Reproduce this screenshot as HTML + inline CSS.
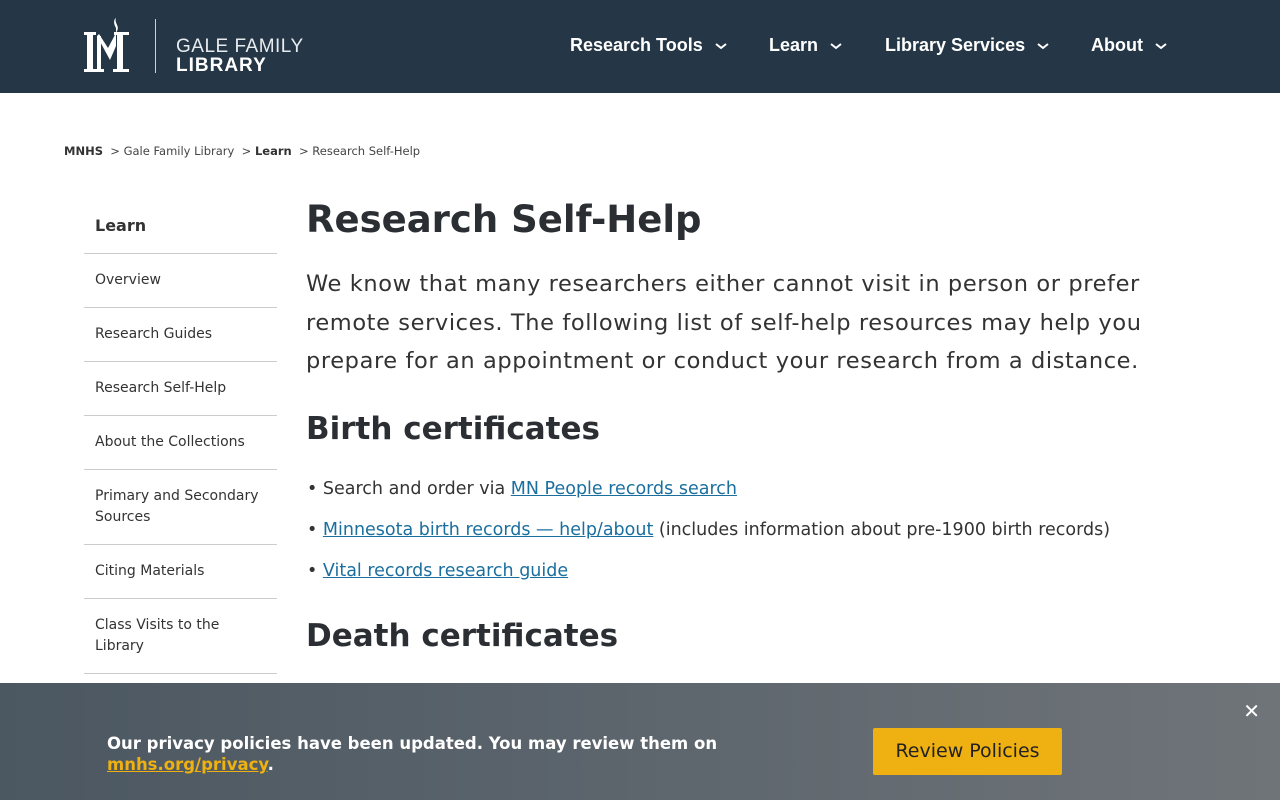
<!DOCTYPE html>
<html><head><meta charset="utf-8"><style>
*{margin:0;padding:0;box-sizing:border-box}
body{width:1280px;height:800px;overflow:hidden;font-family:"DejaVu Sans",sans-serif;color:#2b2f33;background:#fff;position:relative}
.hdr{height:93px;background:#253746;position:relative;color:#fff;font-family:"Liberation Sans",sans-serif}
.logo{position:absolute;left:84px;top:18px}
.vline{position:absolute;left:155px;top:19px;width:1px;height:54px;background:#c8d0d8}
.lt1{position:absolute;left:176px;top:36px;font-size:19px;letter-spacing:.5px;color:#e8ecef}
.lt2{position:absolute;left:176px;top:55px;font-size:19px;font-weight:bold;letter-spacing:1px}
.nav{position:absolute;top:35px;font-size:18px;font-weight:bold;color:#fff}
.nav svg{margin-left:12px;vertical-align:middle}
.bc{position:absolute;top:144px;left:64px;font-size:11.5px;color:#444}
.bc b{color:#333}
.side{position:absolute;left:84px;top:198px;width:193px}
.side div{border-bottom:1px solid #ccc;padding:0 11px;font-size:14px;color:#333;display:flex;align-items:center;line-height:21px}
h1{position:absolute;left:306px;top:198px;font-size:37px;font-weight:bold}
.intro{position:absolute;left:306px;top:265px;width:880px;font-size:22.5px;line-height:38.5px;color:#333;letter-spacing:.6px}
h2{position:absolute;left:306px;font-size:31px;font-weight:bold}
.li{position:absolute;left:307px;font-size:17.5px;color:#333}
.li a{color:#1a6f9e;text-decoration:underline}
.ban{position:absolute;left:0;top:683px;width:1280px;height:117px;background:linear-gradient(90deg,#4b5761,#6f7479)}
.bt{position:absolute;left:107px;top:50px;color:#fff;font-weight:bold;font-size:16.5px;line-height:21px}
.bt a{color:#eeb111;text-decoration:underline}
.btn{position:absolute;left:873px;top:45px;width:189px;height:47px;background:#eeb111;border-radius:2px;color:#222;font-size:19px;text-align:center;line-height:47px}
.x{position:absolute;right:20px;top:16px;color:#fff;font-size:20px}
</style></head><body>
<div class="hdr">
<svg class="logo" width="48" height="56" viewBox="0 0 48 56"><g fill="#fff"><rect x="0" y="14" width="12" height="3"/><rect x="3" y="14" width="6" height="40"/><rect x="0" y="51" width="12" height="3"/><path d="M13 18 L26 42 L32 28 L32 10 C29 5 30 1 32 0 C30 5 36 8 33 13 L24 30 L15 16Z"/><rect x="33" y="14" width="6" height="40"/><rect x="30" y="14" width="15" height="3"/><rect x="29" y="51" width="16" height="3"/><rect x="13" y="18" width="4" height="36"/><rect x="10" y="51" width="10" height="3"/></g></svg>
<div class="vline"></div>
<div class="lt1">GALE FAMILY</div><div class="lt2">LIBRARY</div>
<div class="nav" style="left:570px">Research Tools<svg width="12" height="8"><path d="M1 2l5 4 5-4" stroke="#fff" stroke-width="2" fill="none"/></svg></div>
<div class="nav" style="left:769px">Learn<svg width="12" height="8"><path d="M1 2l5 4 5-4" stroke="#fff" stroke-width="2" fill="none"/></svg></div>
<div class="nav" style="left:885px">Library Services<svg width="12" height="8"><path d="M1 2l5 4 5-4" stroke="#fff" stroke-width="2" fill="none"/></svg></div>
<div class="nav" style="left:1091px">About<svg width="12" height="8"><path d="M1 2l5 4 5-4" stroke="#fff" stroke-width="2" fill="none"/></svg></div>
</div>
<div class="bc"><b>MNHS</b> &nbsp;&gt; Gale Family Library &nbsp;&gt; <b>Learn</b> &nbsp;&gt; Research Self-Help</div>
<div class="side">
<div style="height:56px;font-weight:bold;font-size:16px">Learn</div>
<div style="height:54px">Overview</div>
<div style="height:54px">Research Guides</div>
<div style="height:54px">Research Self-Help</div>
<div style="height:54px">About the Collections</div>
<div style="height:75px">Primary and Secondary Sources</div>
<div style="height:54px">Citing Materials</div>
<div style="height:75px">Class Visits to the Library</div>
</div>
<h1>Research Self-Help</h1>
<div class="intro">We know that many researchers either cannot visit in person or prefer remote services. The following list of self-help resources may help you prepare for an appointment or conduct your research from a distance.</div>
<h2 style="top:411px">Birth certificates</h2>
<div class="li" style="top:479px">• Search and order via <a>MN People records search</a></div>
<div class="li" style="top:520px">• <a>Minnesota birth records — help/about</a> (includes information about pre-1900 birth records)</div>
<div class="li" style="top:561px">• <a>Vital records research guide</a></div>
<h2 style="top:618px">Death certificates</h2>
<div class="ban">
<div class="bt">Our privacy policies have been updated. You may review them on<br><a>mnhs.org/privacy</a>.</div>
<div class="btn">Review Policies</div>
<div class="x">✕</div>
</div>
</body></html>
